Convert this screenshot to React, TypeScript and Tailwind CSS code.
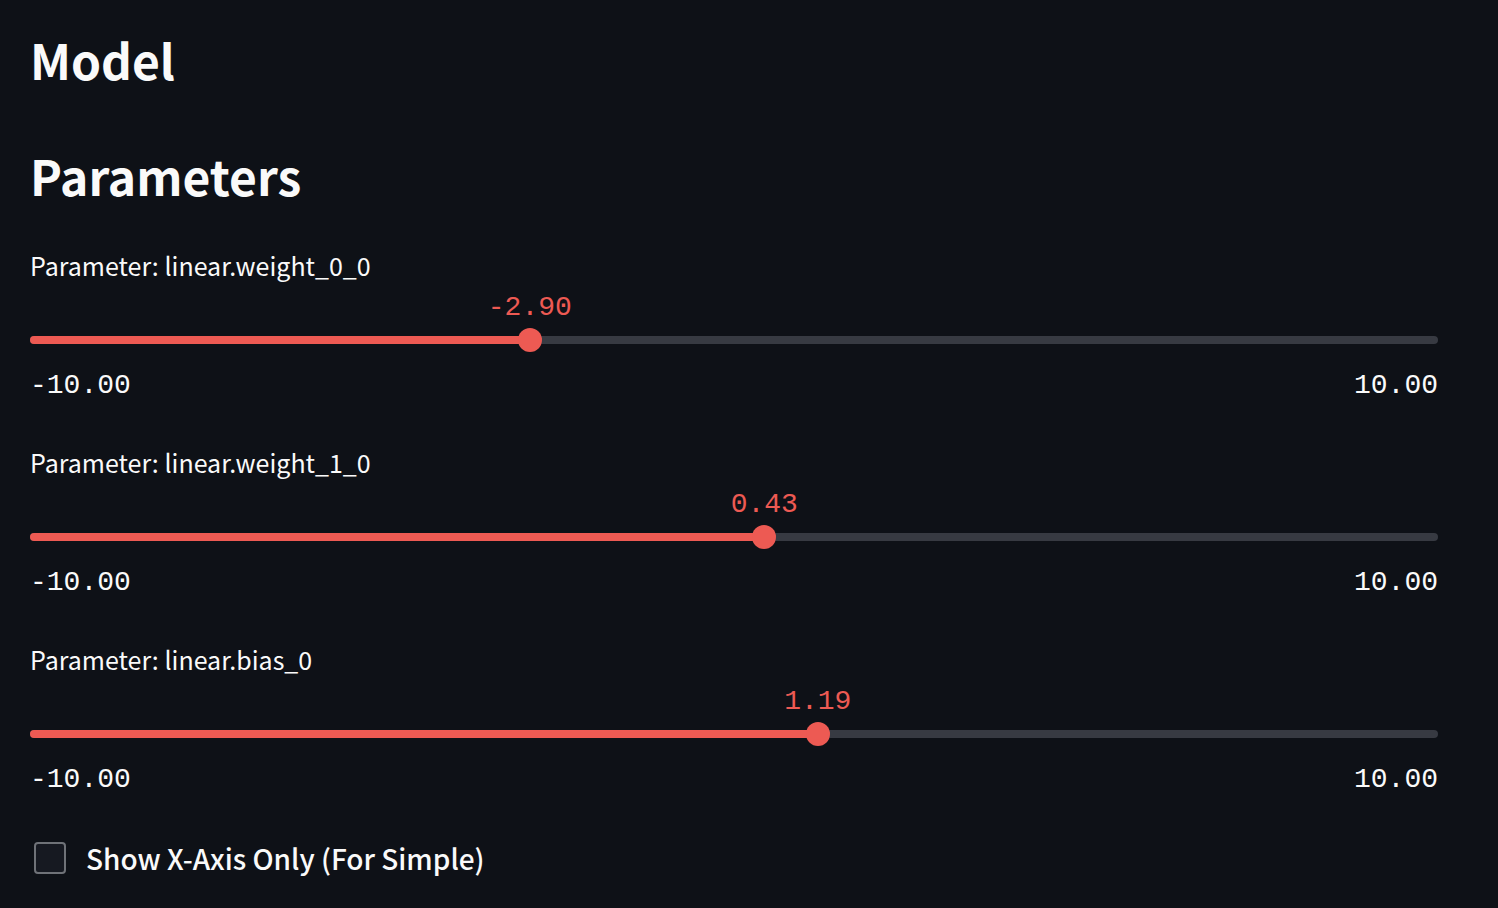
import { useId, useState } from "react";

type Parameter = { name: string; value: number };

const MIN = -10;
const MAX = 10;

const parameters: Parameter[] = [
  { name: "linear.weight_0_0", value: -2.9 },
  { name: "linear.weight_1_0", value: 0.43 },
  { name: "linear.bias_0", value: 1.19 },
];

function ParameterSlider({ name, value: initial }: Parameter) {
  const id = useId();
  const [value, setValue] = useState(initial);
  const percent = ((value - MIN) / (MAX - MIN)) * 100;

  return (
    <div>
      <label htmlFor={id} className="block text-[25px] leading-10">
        Parameter: {name}
      </label>
      <div className="relative mt-[3px] h-10 font-['Liberation_Mono',monospace] text-[28px] leading-10 text-[#ed5a53]">
        <output
          htmlFor={id}
          className="absolute top-0 -translate-x-1/2"
          style={{ left: `${percent}%` }}
        >
          {value.toFixed(2)}
        </output>
      </div>
      <div className="grid items-center">
        <div className="col-start-1 row-start-1 h-2 overflow-hidden rounded-full bg-[#373a42]">
          <div className="h-full bg-[#ed5a53]" style={{ width: `${percent}%` }} />
        </div>
        <input
          id={id}
          type="range"
          min={MIN}
          max={MAX}
          step={0.01}
          value={value}
          onChange={(e) => setValue(Number(e.target.value))}
          className="col-start-1 row-start-1 -mx-3 h-6 cursor-pointer appearance-none bg-transparent outline-none [&::-moz-range-thumb]:size-6 [&::-moz-range-thumb]:rounded-full [&::-moz-range-thumb]:border-0 [&::-moz-range-thumb]:bg-[#ed5a53] [&::-webkit-slider-thumb]:size-6 [&::-webkit-slider-thumb]:appearance-none [&::-webkit-slider-thumb]:rounded-full [&::-webkit-slider-thumb]:bg-[#ed5a53]"
        />
      </div>
      <div className="mt-3.5 flex justify-between font-['Liberation_Mono',monospace] text-[28px] leading-10">
        <span>{MIN.toFixed(2)}</span>
        <span>{MAX.toFixed(2)}</span>
      </div>
    </div>
  );
}

export default function App() {
  const [xOnly, setXOnly] = useState(false);

  return (
    <main className="min-h-screen bg-[#0e1117] pt-[25px] pr-[60px] pb-7 pl-[30px] font-['Noto_Sans_CJK_JP',sans-serif] text-[#fafafa]">
      <h2 className="text-5xl leading-[68px] font-bold">Model</h2>
      <h2 className="mt-12 text-5xl leading-[68px] font-bold">Parameters</h2>
      <div className="mt-9 flex flex-col gap-9">
        {parameters.map((p) => (
          <ParameterSlider key={p.name} {...p} />
        ))}
      </div>
      <label className="mt-[38px] ml-1 flex w-fit cursor-pointer items-center gap-5 text-[28px] leading-10 font-medium">
        <input
          type="checkbox"
          checked={xOnly}
          onChange={(e) => setXOnly(e.target.checked)}
          className="size-8 appearance-none rounded-sm border-2 border-[#6f7278] bg-[#161921] checked:border-[#ed5a53] checked:bg-[#ed5a53]"
        />
        Show X-Axis Only (For Simple)
      </label>
    </main>
  );
}
